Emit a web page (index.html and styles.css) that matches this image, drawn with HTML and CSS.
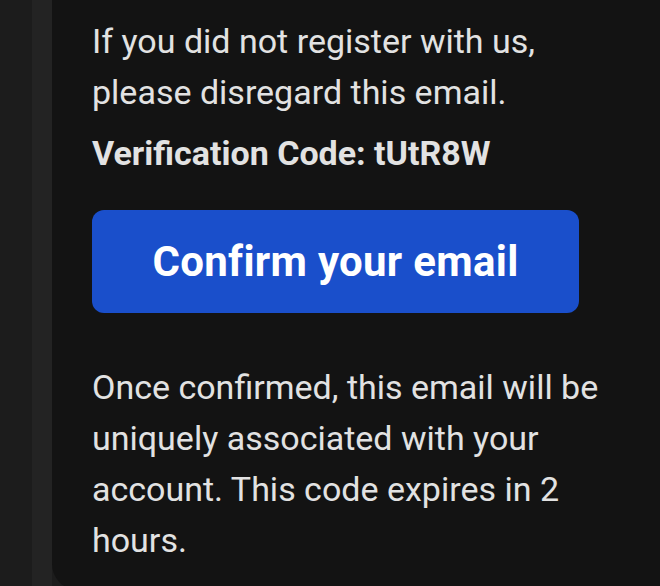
FILE: index.html
```html
<!DOCTYPE html>
<html lang="en">
<head>
    <meta charset="UTF-8">
    <meta name="viewport" content="width=device-width, initial-scale=1.0">
    <title>Confirm your email</title>
    <link rel="stylesheet" href="styles.css">
</head>
<body>
    <div class="page">
        <div class="side-rail"></div>
        <div class="side-gutter"></div>

        <!-- Email card -->
        <div class="mail-card">
            <p class="mail-text">If you did not register with us, please disregard this email.</p>
            <p class="mail-code">Verification Code: tUtR8W</p>
            <a class="confirm-button" href="#">Confirm your email</a>
            <p class="mail-text">Once confirmed, this email will be uniquely associated with your account. This code expires in 2 hours.</p>
        </div>
    </div>
</body>
</html>
```

FILE: styles.css
```css
body {
    margin: 0;
    padding: 0;
    height: 586px;
    overflow: hidden;
    background-color: #1c1c1c;
    font-family: Roboto, 'Liberation Sans', Arial, sans-serif;
}

.page {
    display: flex;
    height: 100%;
}

.side-rail {
    width: 32px;
    background-color: #1c1c1c;
}

.side-gutter {
    width: 20px;
    background-color: #232323;
}

/* Email card */
.mail-card {
    flex: 1;
    height: 590px;
    padding: 16px 30px 0 40px;
    box-sizing: border-box;
    background-color: #131313;
    border-bottom-left-radius: 26px;
    color: #e2e2e2;
}

.mail-text {
    margin: 0;
    font-size: 34px;
    line-height: 51px;
}

.mail-code {
    margin: 10px 0 0;
    font-size: 34px;
    line-height: 51px;
    font-weight: 700;
}

.confirm-button {
    display: flex;
    justify-content: center;
    align-items: center;
    width: 487px;
    height: 103px;
    margin: 31px 0 49px;
    background-color: #1a4fcb;
    border-radius: 12px;
    color: #ffffff;
    font-size: 42px;
    letter-spacing: 0.3px;
    font-weight: 700;
    text-decoration: none;
}
```
